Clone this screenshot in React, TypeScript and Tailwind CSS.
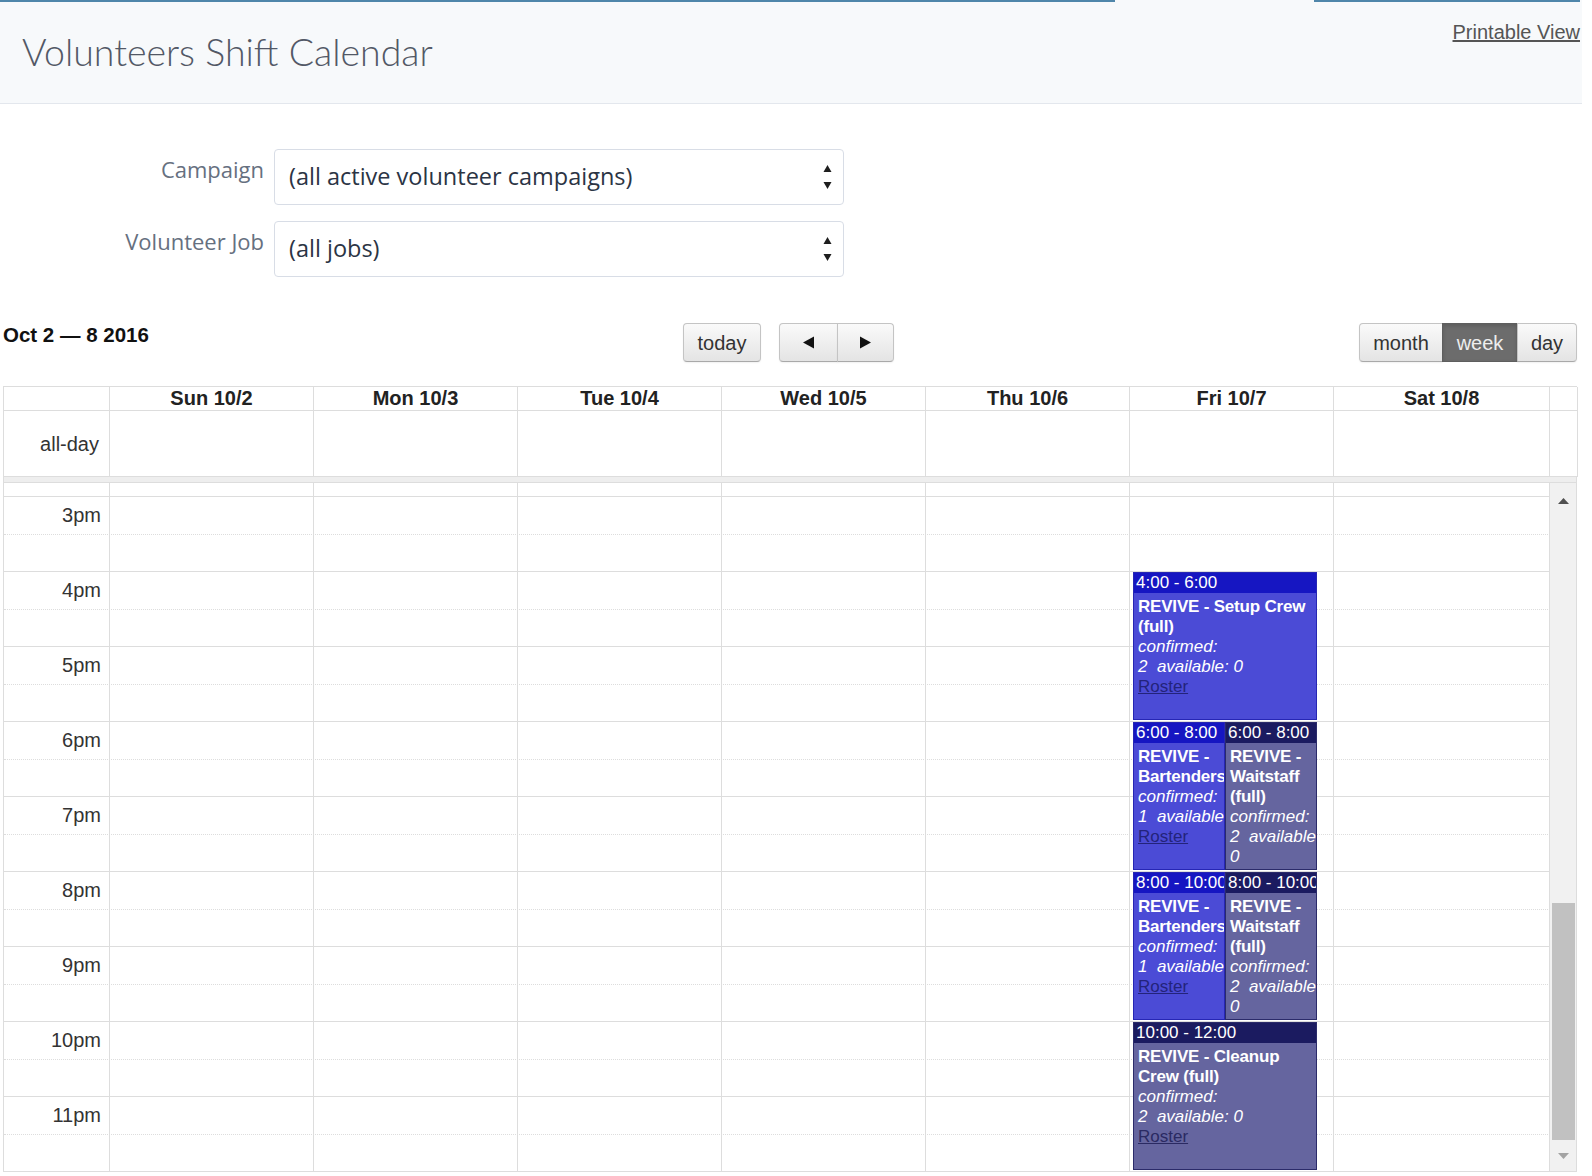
import React from 'react';

const HEAD_GRID = 'grid grid-cols-[106px_204px_204px_204px_204px_204px_204px_216px_28px]';
const BODY_GRID = 'grid grid-cols-[106px_204px_204px_204px_204px_204px_204px_216px]';

const days = ['Sun 10/2', 'Mon 10/3', 'Tue 10/4', 'Wed 10/5', 'Thu 10/6', 'Fri 10/7', 'Sat 10/8'];
const hours = ['3pm', '4pm', '5pm', '6pm', '7pm', '8pm', '9pm', '10pm', '11pm'];

type Line = { text: string; kind: 'title' | 'stat' | 'roster' };
type Shift = { id: number; pos: string; time: string; tone: 'blue' | 'slate'; lines: Line[] };

const tones = {
    blue: { box: 'bg-[#4b4bd6] border-[#2626b4]', head: 'bg-[#1616c2]', link: 'text-[#23237a]' },
    slate: { box: 'bg-[#65659f] border-[#2b2b6a]', head: 'bg-[#1b1b60]', link: 'text-[#2a2a62]' },
};

const shifts: Shift[] = [
    {
        id: 1, pos: 'top-[89px] left-[3px] w-[184px] h-[148px]', time: '4:00 - 6:00', tone: 'blue',
        lines: [
            { text: 'REVIVE - Setup Crew', kind: 'title' },
            { text: '(full)', kind: 'title' },
            { text: 'confirmed:', kind: 'stat' },
            { text: '2\u00a0\u00a0available: 0', kind: 'stat' },
            { text: 'Roster', kind: 'roster' },
        ],
    },
    {
        id: 2, pos: 'top-[239px] left-[3px] w-[92px] h-[148px]', time: '6:00 - 8:00', tone: 'blue',
        lines: [
            { text: 'REVIVE -', kind: 'title' },
            { text: 'Bartenders', kind: 'title' },
            { text: 'confirmed:', kind: 'stat' },
            { text: '1\u00a0\u00a0available: 1', kind: 'stat' },
            { text: 'Roster', kind: 'roster' },
        ],
    },
    {
        id: 3, pos: 'top-[239px] left-[95px] w-[92px] h-[148px]', time: '6:00 - 8:00', tone: 'slate',
        lines: [
            { text: 'REVIVE -', kind: 'title' },
            { text: 'Waitstaff', kind: 'title' },
            { text: '(full)', kind: 'title' },
            { text: 'confirmed:', kind: 'stat' },
            { text: '2\u00a0\u00a0available:', kind: 'stat' },
            { text: '0', kind: 'stat' },
        ],
    },
    {
        id: 4, pos: 'top-[389px] left-[3px] w-[92px] h-[148px]', time: '8:00 - 10:00', tone: 'blue',
        lines: [
            { text: 'REVIVE -', kind: 'title' },
            { text: 'Bartenders', kind: 'title' },
            { text: 'confirmed:', kind: 'stat' },
            { text: '1\u00a0\u00a0available: 1', kind: 'stat' },
            { text: 'Roster', kind: 'roster' },
        ],
    },
    {
        id: 5, pos: 'top-[389px] left-[95px] w-[92px] h-[148px]', time: '8:00 - 10:00', tone: 'slate',
        lines: [
            { text: 'REVIVE -', kind: 'title' },
            { text: 'Waitstaff', kind: 'title' },
            { text: '(full)', kind: 'title' },
            { text: 'confirmed:', kind: 'stat' },
            { text: '2\u00a0\u00a0available:', kind: 'stat' },
            { text: '0', kind: 'stat' },
        ],
    },
    {
        id: 6, pos: 'top-[539px] left-[3px] w-[184px] h-[148px]', time: '10:00 - 12:00', tone: 'slate',
        lines: [
            { text: 'REVIVE - Cleanup', kind: 'title' },
            { text: 'Crew (full)', kind: 'title' },
            { text: 'confirmed:', kind: 'stat' },
            { text: '2\u00a0\u00a0available: 0', kind: 'stat' },
            { text: 'Roster', kind: 'roster' },
        ],
    },
];

const SelectArrows = () => (
    <svg width="9" height="26" viewBox="0 0 9 26" className="text-[#1e1e1e]">
        <path d="M4.5 1 L8.5 8 H0.5 Z" fill="currentColor" />
        <path d="M4.5 25 L8.5 18 H0.5 Z" fill="currentColor" />
    </svg>
);

const FilterRow = ({ label, value }: { label: string; value: string }) => (
    <div className="flex items-start">
        <label className="w-[264px] pt-[6px] text-right font-['Open_Sans',sans-serif] text-[22px] leading-[28px] text-[#66707f]">{label}</label>
        <div className="ml-[10px] flex h-[56px] w-[570px] items-center justify-between rounded-[4px] border border-[#d8dde6] bg-white pl-[14px] pr-[11px]">
            <span className="font-['Open_Sans',sans-serif] text-[23.5px] text-[#2b3444]">{value}</span>
            <SelectArrows />
        </div>
    </div>
);

const btnBase = 'flex h-[39px] items-center justify-center border border-[#c4c4c4] border-b-[#a9a9a9] bg-linear-to-b from-[#fafafa] to-[#e4e4e4] text-[20px] text-[#333] shadow-[0_1px_2px_rgba(0,0,0,0.06)]';

const ShiftEvent = ({ shift }: { shift: Shift }) => {
    const t = tones[shift.tone];
    return (
        <div className={`absolute overflow-hidden border text-white ${shift.pos} ${t.box}`}>
            <div className={`h-[20px] whitespace-nowrap pl-[2px] text-[17px] leading-[20px] ${t.head}`}>{shift.time}</div>
            <div className="pl-[4px] pt-[4px] text-[17px] leading-[20px]">
                {shift.lines.map((l, i) => (
                    <div
                        key={i}
                        className={
                            l.kind === 'title'
                                ? 'whitespace-nowrap font-semibold tracking-[-0.2px]'
                                : l.kind === 'stat'
                                    ? 'whitespace-nowrap italic'
                                    : `underline ${t.link}`
                        }
                    >
                        {l.text}
                    </div>
                ))}
            </div>
        </div>
    );
};

const DayCells = () => (
    <>
        {days.map(d => (
            <div key={d} className="border-r border-[#ddd]" />
        ))}
    </>
);

export default function App() {
    return (
        <div className="min-h-[1176px] w-[1592px] bg-white font-['Liberation_Sans',Arial,sans-serif] text-[#333]">
            {/* page header */}
            <div className="w-[1582px] bg-[#f7f9fb]">
                <div className="flex h-[2px]">
                    <div className="w-[1115px] bg-[#4f86aa]" />
                    <div className="w-[199px]" />
                    <div className="w-[266px] bg-[#4f86aa]" />
                </div>
                <div className="flex h-[102px] items-start justify-between border-b border-[#e3e7ed]">
                    <h1 className="pl-[22px] pt-[28px] font-['Lato',sans-serif] text-[37.5px] font-light leading-[44px] text-[#525866]">
                        Volunteers Shift Calendar
                    </h1>
                    <a href="#" className="pr-[2px] pt-[18px] text-[20px] leading-[24px] text-[#555] underline">
                        Printable View
                    </a>
                </div>
            </div>

            {/* filters */}
            <div className="flex flex-col gap-[16px] pt-[45px]">
                <FilterRow label="Campaign" value="(all active volunteer campaigns)" />
                <FilterRow label="Volunteer Job" value="(all jobs)" />
            </div>

            {/* toolbar */}
            <div className="mt-[46px] flex w-[1582px] items-start pl-[3px] pr-[5px]">
                <h2 className="w-[680px] text-[20.5px] font-bold leading-[24px] text-[#111]">Oct 2 — 8 2016</h2>
                <button className={`${btnBase} w-[78px] rounded-[4px]`}>today</button>
                <div className="ml-[18px] flex">
                    <button className={`${btnBase} w-[59px] rounded-l-[4px]`}>
                        <svg width="13" height="13" viewBox="0 0 13 13"><path d="M1 6.5 L12 0.5 V12.5 Z" fill="#111" /></svg>
                    </button>
                    <button className={`${btnBase} -ml-px w-[57px] rounded-r-[4px]`}>
                        <svg width="13" height="13" viewBox="0 0 13 13"><path d="M12 6.5 L1 0.5 V12.5 Z" fill="#111" /></svg>
                    </button>
                </div>
                <div className="flex-1" />
                <div className="flex">
                    <button className={`${btnBase} w-[84px] rounded-l-[4px]`}>month</button>
                    <button className="-ml-px flex h-[39px] w-[76px] items-center justify-center border border-[#5e5e5e] bg-[#6c6c6c] text-[20px] text-[#eee] shadow-[inset_0_2px_4px_rgba(0,0,0,0.15)]">
                        week
                    </button>
                    <button className={`${btnBase} -ml-px w-[60px] rounded-r-[4px]`}>day</button>
                </div>
            </div>

            {/* calendar */}
            <div className="ml-[3px] mt-[24px] w-[1574px] border-l border-t border-[#ddd]">
                <div className={`${HEAD_GRID} h-[24px]`}>
                    <div className="border-b border-r border-[#ddd]" />
                    {days.map(d => (
                        <div key={d} className="border-b border-r border-[#ddd] text-center text-[20px] font-bold leading-[22px] text-[#222]">
                            {d}
                        </div>
                    ))}
                    <div className="border-b border-r border-[#ddd]" />
                </div>
                <div className={`${HEAD_GRID} h-[66px]`}>
                    <div className="flex items-center justify-end border-b border-r border-[#ddd] pr-[10px] text-[20px]">all-day</div>
                    {days.map(d => (
                        <div key={d} className="border-b border-r border-[#ddd]" />
                    ))}
                    <div className="border-b border-r border-[#ddd]" />
                </div>
                <div className="h-[6px] border-b border-r border-[#ddd] bg-[#eee]" />

                <div className="flex border-b border-[#ddd]">
                    <div className="relative w-[1546px]">
                        <div className={`${BODY_GRID} h-[13px]`}>
                            <div className="border-r border-[#ddd]" />
                            <DayCells />
                        </div>
                        {hours.map(h => (
                            <React.Fragment key={h}>
                                <div className={`${BODY_GRID} h-[37.5px] border-t border-[#ddd]`}>
                                    <div className="border-r border-[#ddd] pr-[8px] text-right text-[20px] leading-[36px]">{h}</div>
                                    <DayCells />
                                </div>
                                <div className={`${BODY_GRID} h-[37.5px] border-t border-dotted border-[#ddd]`}>
                                    <div className="border-r border-[#ddd]" />
                                    <DayCells />
                                </div>
                            </React.Fragment>
                        ))}

                        <div className={`absolute inset-0 ${BODY_GRID}`}>
                            <div className="relative col-start-7">
                                {shifts.map(s => (
                                    <ShiftEvent key={s.id} shift={s} />
                                ))}
                            </div>
                        </div>
                    </div>

                    {/* scrollbar */}
                    <div className="flex w-[28px] flex-col border-r border-[#ddd] bg-[#f1f1f1]">
                        <div className="flex h-[36px] items-center justify-center">
                            <svg width="11" height="6" viewBox="0 0 11 6"><path d="M5.5 0 L11 6 H0 Z" fill="#505050" /></svg>
                        </div>
                        <div className="flex-1" />
                        <div className="ml-[2px] h-[237px] w-[23px] bg-[#c1c1c1]" />
                        <div className="flex h-[31px] items-center justify-center">
                            <svg width="11" height="6" viewBox="0 0 11 6"><path d="M5.5 6 L11 0 H0 Z" fill="#a3a3a3" /></svg>
                        </div>
                    </div>
                </div>
            </div>
        </div>
    );
}
